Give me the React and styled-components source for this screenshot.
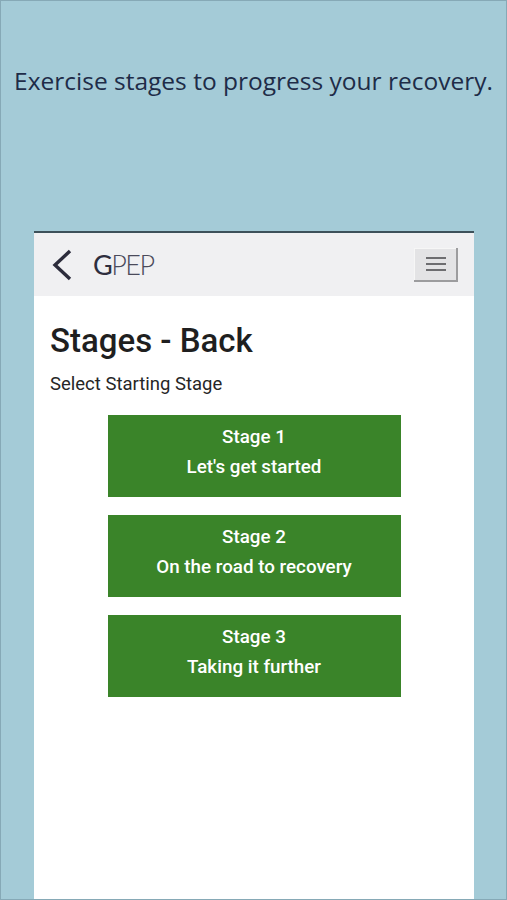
import React from "react";
import styled, { createGlobalStyle } from "styled-components";

const GlobalStyle = createGlobalStyle`
  html, body {
    margin: 0;
    padding: 0;
  }
  body {
    font-family: Roboto, "Liberation Sans", sans-serif;
  }
`;

const Page = styled.div`
  box-sizing: border-box;
  width: 507px;
  height: 900px;
  background: #a4cbd7;
  border: 1px solid #86a9b6;
  display: flex;
  flex-direction: column;
  overflow: hidden;
`;

const Caption = styled.h1`
  margin: 63px 0 0;
  height: 34px;
  font-family: "Open Sans", sans-serif;
  font-weight: 400;
  font-size: 24.5px;
  line-height: 34px;
  color: #1e2c48;
  text-align: center;
  white-space: nowrap;
`;

const Phone = styled.div`
  margin: 133px 0 0 33px;
  width: 440px;
  flex: 1;
  background: #fff;
  border-top: 2px solid #3d515a;
  display: flex;
  flex-direction: column;
`;

const Header = styled.header`
  height: 63px;
  background: #f0f0f2;
  display: flex;
  align-items: center;
  padding: 0 16px;
`;

const BackButton = styled.button`
  border: none;
  background: none;
  padding: 0;
  margin-right: 19px;
  display: flex;
  align-items: center;
`;

const Logo = styled.span`
  font-family: Lato, sans-serif;
  font-size: 27px;
  font-weight: 300;
  color: #4a4a5a;
  letter-spacing: -1.5px;

  b {
    font-weight: 400;
    color: #2e2e3e;
  }
`;

const MenuButton = styled.button`
  margin-left: auto;
  width: 44px;
  height: 34px;
  background: #e3e3e5;
  border: none;
  box-shadow: inset -2px -2px 0 #9c9c9e, inset 1px 1px 0 #f6f6f6;
  display: flex;
  flex-direction: column;
  align-items: center;
  justify-content: center;
  gap: 4px;
  padding: 0 0 1px 0;
`;

const MenuLine = styled.span`
  width: 20px;
  height: 2px;
  background: #6d6d70;
`;

const Content = styled.main`
  padding: 26px 16px 0;
  display: flex;
  flex-direction: column;
`;

const Title = styled.h2`
  margin: 0;
  font-size: 33px;
  font-weight: 500;
  color: #1f1f1f;
  line-height: 38px;
`;

const Subtitle = styled.p`
  margin: 13px 0 0;
  font-size: 18.5px;
  color: #262626;
  line-height: 22px;
`;

const StageList = styled.div`
  margin-top: 20px;
  display: flex;
  flex-direction: column;
  align-items: center;
  gap: 18px;
`;

const StageButton = styled.button`
  width: 293px;
  height: 82px;
  background: #3a8429;
  border: none;
  color: #fff;
  font-family: Roboto, sans-serif;
  font-weight: 500;
  font-size: 18.8px;
  line-height: 30px;
  display: flex;
  flex-direction: column;
  align-items: center;
  justify-content: center;
  padding: 0 0 9px;
`;

const stages = [
  { name: "Stage 1", label: "Let's get started" },
  { name: "Stage 2", label: "On the road to recovery" },
  { name: "Stage 3", label: "Taking it further" },
];

export default function App() {
  return (
    <>
      <GlobalStyle />
      <Page>
        <Caption>Exercise stages to progress your recovery.</Caption>
        <Phone>
          <Header>
            <BackButton aria-label="Back">
              <svg width="24" height="32" viewBox="0 0 24 32">
                <path
                  d="M20 2 L5 16 L20 30"
                  fill="none"
                  stroke="#2c2c3c"
                  strokeWidth="3.4"
                />
              </svg>
            </BackButton>
            <Logo>
              <b>G</b>PEP
            </Logo>
            <MenuButton aria-label="Menu">
              <MenuLine />
              <MenuLine />
              <MenuLine />
            </MenuButton>
          </Header>
          <Content>
            <Title>Stages - Back</Title>
            <Subtitle>Select Starting Stage</Subtitle>
            <StageList>
              {stages.map((s) => (
                <StageButton key={s.name}>
                  <span>{s.name}</span>
                  <span>{s.label}</span>
                </StageButton>
              ))}
            </StageList>
          </Content>
        </Phone>
      </Page>
    </>
  );
}
